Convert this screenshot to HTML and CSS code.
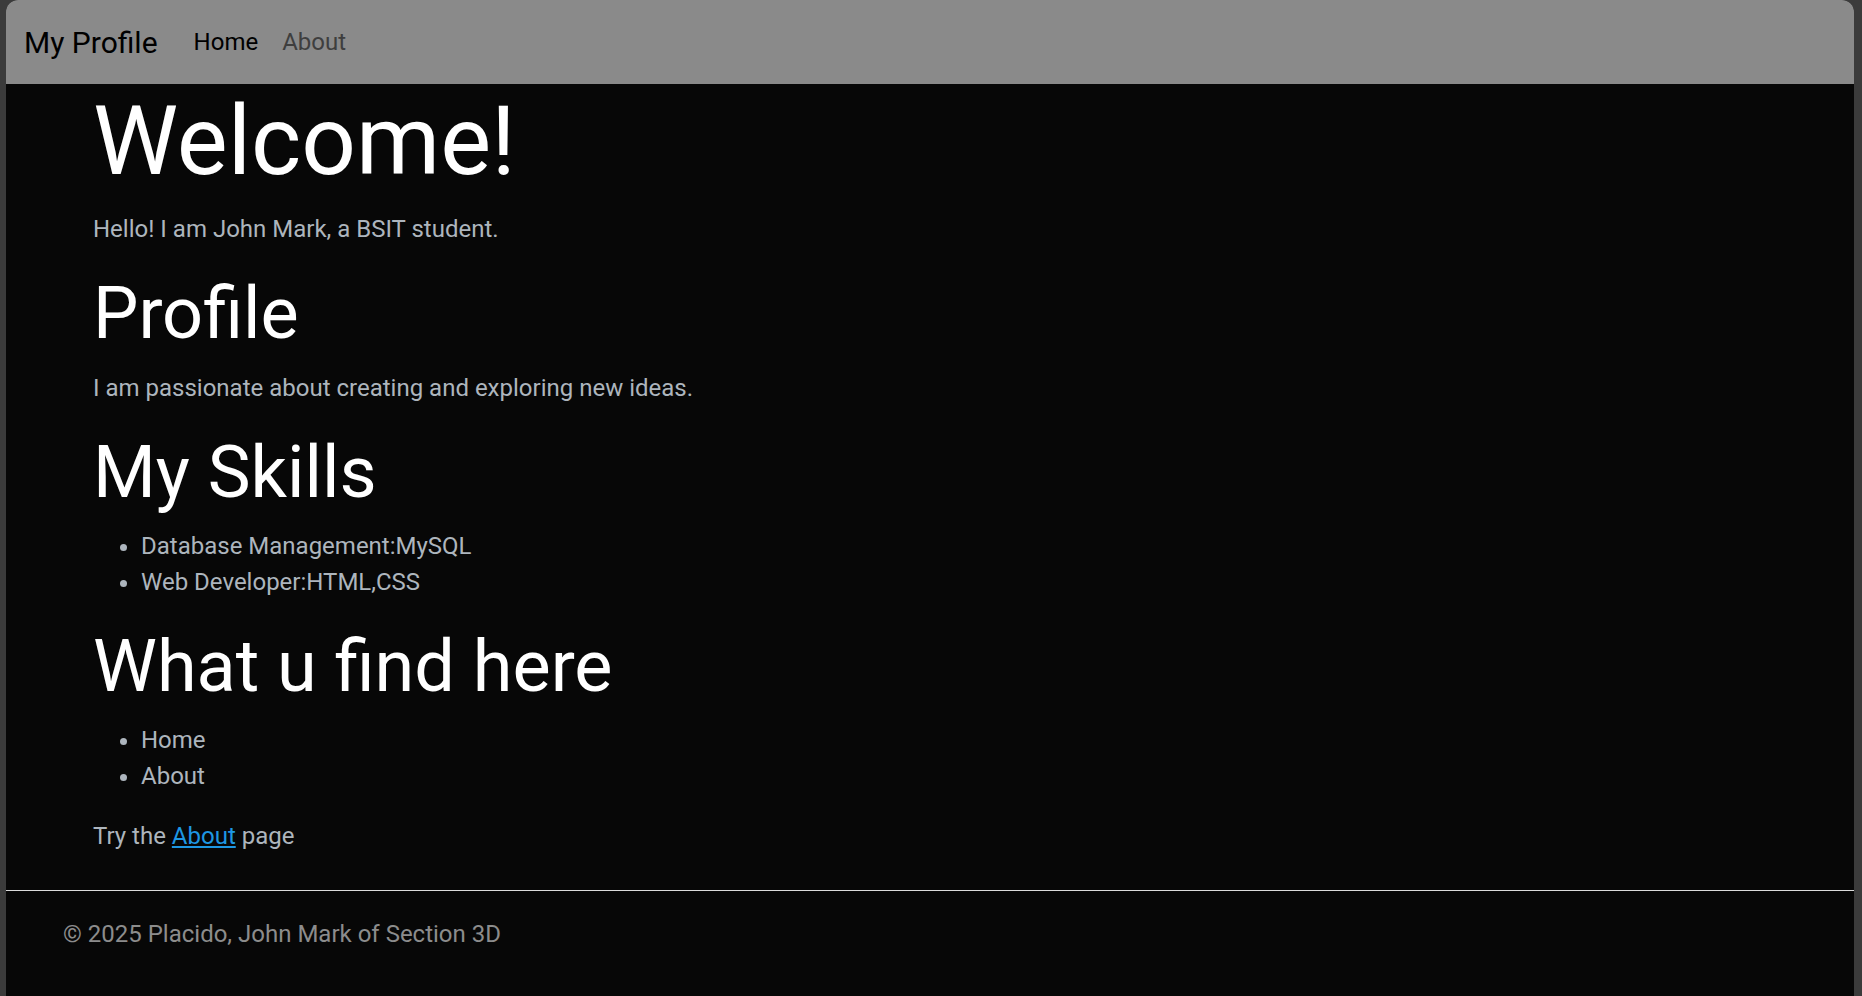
FILE: index.html
```html
<!DOCTYPE html>
<html lang="en">
<head>
<meta charset="utf-8">
<title>My Profile</title>
<link rel="stylesheet" href="styles.css">
</head>
<body>
<div class="window">
  <nav class="navbar">
    <a class="brand" href="#">My Profile</a>
    <ul class="nav-links">
      <li><a class="nav-link active" href="#">Home</a></li>
      <li><a class="nav-link" href="#">About</a></li>
    </ul>
  </nav>
  <main class="container">
    <h1 class="display-3">Welcome!</h1>
    <p>Hello! I am John Mark, a BSIT student.</p>
    <h2 class="display-5">Profile</h2>
    <p>I am passionate about creating and exploring new ideas.</p>
    <h2 class="display-5">My Skills</h2>
    <ul class="list">
      <li>Database Management:MySQL</li>
      <li>Web Developer:HTML,CSS</li>
    </ul>
    <h2 class="display-5">What u find here</h2>
    <ul class="list">
      <li>Home</li>
      <li>About</li>
    </ul>
    <p>Try the <a class="link" href="#">About</a> page</p>
  </main>
  <footer class="footer">
    <p class="footer-text">&copy; 2025 Placido, John Mark of Section 3D</p>
  </footer>
</div>
</body>
</html>
```
FILE: styles.css
```css
* { box-sizing: border-box; }
html, body { margin: 0; padding: 0; }
body {
  background: #3b3b3b;
  font-family: Roboto, "Noto Sans", "Liberation Sans", sans-serif;
  color: #adb5bd;
  font-size: 24px;
  line-height: 1.5;
}
.window {
  margin-left: 6px;
  width: 1848px;
  min-height: 996px;
  background: #070707;
  border-radius: 12px 12px 0 0;
  overflow: hidden;
  display: flex;
  flex-direction: column;
}
.navbar {
  background: #8a8a8a;
  height: 84px;
  padding: 12px 18px;
  display: flex;
  align-items: center;
}
.brand {
  font-size: 30px;
  line-height: 45px;
  padding: 7.5px 0;
  margin-right: 24px;
  color: #000;
  text-decoration: none;
}
.nav-links {
  list-style: none;
  margin: 0;
  padding: 0;
  display: flex;
}
.nav-link {
  display: block;
  padding: 12px;
  font-size: 24px;
  line-height: 36px;
  color: #3e3e3e;
  text-decoration: none;
}
.nav-link.active { color: #000; }
.container {
  width: 100%;
  max-width: 1710px;
  margin: 0 auto;
  padding: 0 18px;
}
.display-3, .display-5 {
  margin: 0 0 12px;
  font-weight: 400;
  line-height: 1.2;
  color: #fff;
}
.display-3 { font-size: 96px; }
.display-5 { font-size: 72px; }
.container p { margin: 0 0 24px; }
.list {
  margin: 0 0 24px;
  padding-left: 48px;
}
.link { color: #1e97e3; }
.footer {
  margin-top: 11.5px;
  border-top: 1px solid #dcdcdc;
  padding: 25.5px 57px 24px;
}
.footer-text {
  margin: 0;
  color: #8c8c8c;
}
```
